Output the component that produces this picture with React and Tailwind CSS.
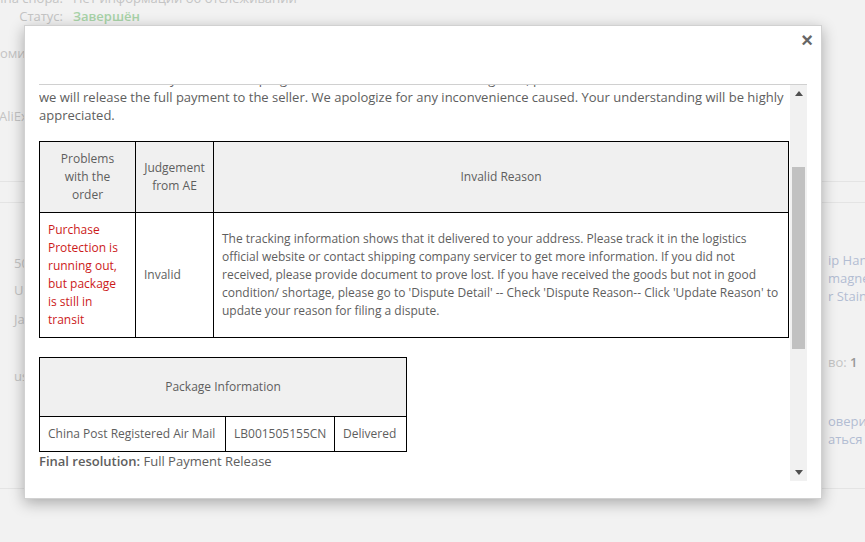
import { useLayoutEffect, useRef } from "react";

const font = "font-['Open_Sans','Liberation_Sans',sans-serif]";

function Backdrop() {
  return (
    <div className="text-[13px] leading-[18px] text-[#c4c4c4]">
      <div className="-mt-[11px]">
        <div className="flex">
          <div className="flex w-[63px] justify-end whitespace-nowrap">Причина спора:</div>
          <div className="ml-[10px] whitespace-nowrap">Нет информации об отслеживании</div>
        </div>
        <div className="flex">
          <div className="flex w-[63px] justify-end whitespace-nowrap">Статус:</div>
          <div className="ml-[10px] whitespace-nowrap font-semibold text-[#a8d3a8]">Завершён</div>
        </div>
      </div>
      <div className="mt-[19px] -ml-[8px] whitespace-nowrap">Комиссия</div>
      <div className="mt-[45px] -ml-[1px] whitespace-nowrap">AliExpress</div>
      <div className="mt-[56px] border-t border-[#e4e4e4]" />
      <div className="mt-[20px] border-t border-[#e4e4e4]" />
      <div className="flex justify-between">
        <div className="pl-[14px] whitespace-nowrap">
          <div className="mt-[51px]">50 pcs</div>
          <div className="mt-[9px]">US $</div>
          <div className="mt-[11px]">Jan</div>
          <div className="mt-[39px]">us</div>
        </div>
        <div className="w-[40px] overflow-hidden whitespace-nowrap pl-[3px]">
          <div className="mt-[48px] text-[#b2bdd3]">
            <div>ip Handle</div>
            <div>magnetic</div>
            <div>r Stainless</div>
          </div>
          <div className="mt-[48px]">
            во: <span className="font-semibold text-[#999]">1</span>
          </div>
          <div className="mt-[41px] text-[#b2bdd3]">
            <div>оверить</div>
            <div>аться с</div>
          </div>
        </div>
      </div>
      <div className="mt-[40px] border-t border-[#e4e4e4]" />
    </div>
  );
}

function DecisionTable() {
  return (
    <table className="w-full border-collapse text-[12px] leading-[18px] text-[#5e5e5e]">
      <thead>
        <tr className="bg-[#f0f0f0]">
          <th className="w-[96px] border border-black px-[8px] py-[8px] text-center font-normal">
            Problems with the order
          </th>
          <th className="w-[78px] border border-black px-[8px] py-[8px] text-center font-normal">
            Judgement from AE
          </th>
          <th className="border border-black px-[8px] py-[8px] text-center font-normal">
            Invalid Reason
          </th>
        </tr>
      </thead>
      <tbody>
        <tr>
          <td className="border border-black px-[8px] py-[8px] align-middle text-[#cc1a1a]">
            Purchase Protection is running out, but package is still in transit
          </td>
          <td className="border border-black px-[8px] py-[8px] align-middle">Invalid</td>
          <td className="border border-black px-[8px] py-[8px] align-middle">
            The tracking information shows that it delivered to your address. Please track it in
            the logistics official website or contact shipping company servicer to get more
            information. If you did not received, please provide document to prove lost. If you
            have received the goods but not in good condition/ shortage, please go to 'Dispute
            Detail' -- Check 'Dispute Reason-- Click 'Update Reason' to update your reason for
            filing a dispute.
          </td>
        </tr>
      </tbody>
    </table>
  );
}

function PackageTable() {
  return (
    <table className="w-[367px] table-fixed border-collapse text-[12px] leading-[18px] text-[#5e5e5e]">
      <colgroup>
        <col className="w-[186px]" />
        <col className="w-[109px]" />
        <col className="w-[72px]" />
      </colgroup>
      <thead>
        <tr className="bg-[#f0f0f0]">
          <th colSpan={3} className="h-[59px] border border-black px-[8px] text-center font-normal">
            Package Information
          </th>
        </tr>
      </thead>
      <tbody>
        <tr>
          <td className="whitespace-nowrap border border-black px-[8px] py-[8px]">
            China Post Registered Air Mail
          </td>
          <td className="whitespace-nowrap border border-black px-[8px] py-[8px]">LB001505155CN</td>
          <td className="whitespace-nowrap border border-black px-[8px] py-[8px]">Delivered</td>
        </tr>
      </tbody>
    </table>
  );
}

function ScrollBar() {
  return (
    <div className="flex w-[17px] shrink-0 flex-col bg-[#f1f1f1]">
      <div className="flex h-[17px] items-center justify-center">
        <svg width="8" height="5" viewBox="0 0 8 5">
          <path d="M0 5 L4 0 L8 5 Z" fill="#505050" />
        </svg>
      </div>
      <div className="flex-1 px-[2px]">
        <div className="mt-[65px] h-[182px] bg-[#c1c1c1]" />
      </div>
      <div className="flex h-[17px] items-center justify-center">
        <svg width="8" height="5" viewBox="0 0 8 5">
          <path d="M0 0 L8 0 L4 5 Z" fill="#505050" />
        </svg>
      </div>
    </div>
  );
}

function DecisionModal() {
  const scrollRef = useRef(null);
  const markRef = useRef(null);

  useLayoutEffect(() => {
    if (scrollRef.current && markRef.current) {
      scrollRef.current.scrollTop = markRef.current.offsetTop - 3;
    }
  }, []);

  return (
    <div className="absolute left-[24px] top-[25px] flex h-[474px] w-[798px] flex-col border border-[rgba(0,0,0,0.18)] bg-white shadow-[0_4px_14px_rgba(0,0,0,0.3)]">
      <div className="flex h-[58px] shrink-0 items-start justify-end pr-[8px] pt-[4px]">
        <button className="font-['Liberation_Sans',sans-serif] text-[20px] font-bold leading-none text-[#666]">
          ×
        </button>
      </div>
      <div className="ml-[14px] flex h-[397px] w-[768px] border-t border-[#d0d0d0]">
        <div
          ref={scrollRef}
          className="relative w-[751px] overflow-y-scroll text-[13px] leading-[18px] text-[#5e5e5e] [scrollbar-width:none] [&::-webkit-scrollbar]:hidden"
        >
          <p>Dear Buyer,</p>
          <p className="mt-[10px]">
            Thank you for your patience. After carefully reviewing the information and evidence
            provided by both parties, the AliExpress dispute team has reached the following
            decision on your case. According to the tracking information, the package has been
            delivered to the address you provided when placing the order. Since no valid evidence
            was provided to show that the order was not received or that the goods were not as
            described, the claim you submitted cannot be supported at this time. Based on the
            rules of the Buyer Protection program and the results of our investigation, please be
            informed that
          </p>
          <p ref={markRef}>
            we will release the full payment to the seller. We apologize for any inconvenience
            caused. Your understanding will be highly appreciated.
          </p>
          <div className="mt-[17px] pr-[1px]">
            <DecisionTable />
          </div>
          <div className="mt-[19px]">
            <PackageTable />
          </div>
          <p>
            <span className="font-semibold">Final resolution:</span> Full Payment Release
          </p>
          <p className="mt-[22px]">
            If you still have questions about this decision, you can contact the seller directly
            through the order page or reach AliExpress customer service for further help. Please
            keep all chat records, photos and documents related to this order, as they may be
            needed if the case is reviewed again. Disputes that have been closed cannot be
            reopened.
          </p>
          <p className="mt-[18px]">Best regards,</p>
          <p>AliExpress Dispute Team</p>
          <div className="h-[18px]" />
        </div>
        <ScrollBar />
      </div>
    </div>
  );
}

export default function App() {
  return (
    <div className={`relative h-[542px] w-full overflow-hidden bg-[#f2f2f2] ${font}`}>
      <Backdrop />
      <DecisionModal />
    </div>
  );
}
